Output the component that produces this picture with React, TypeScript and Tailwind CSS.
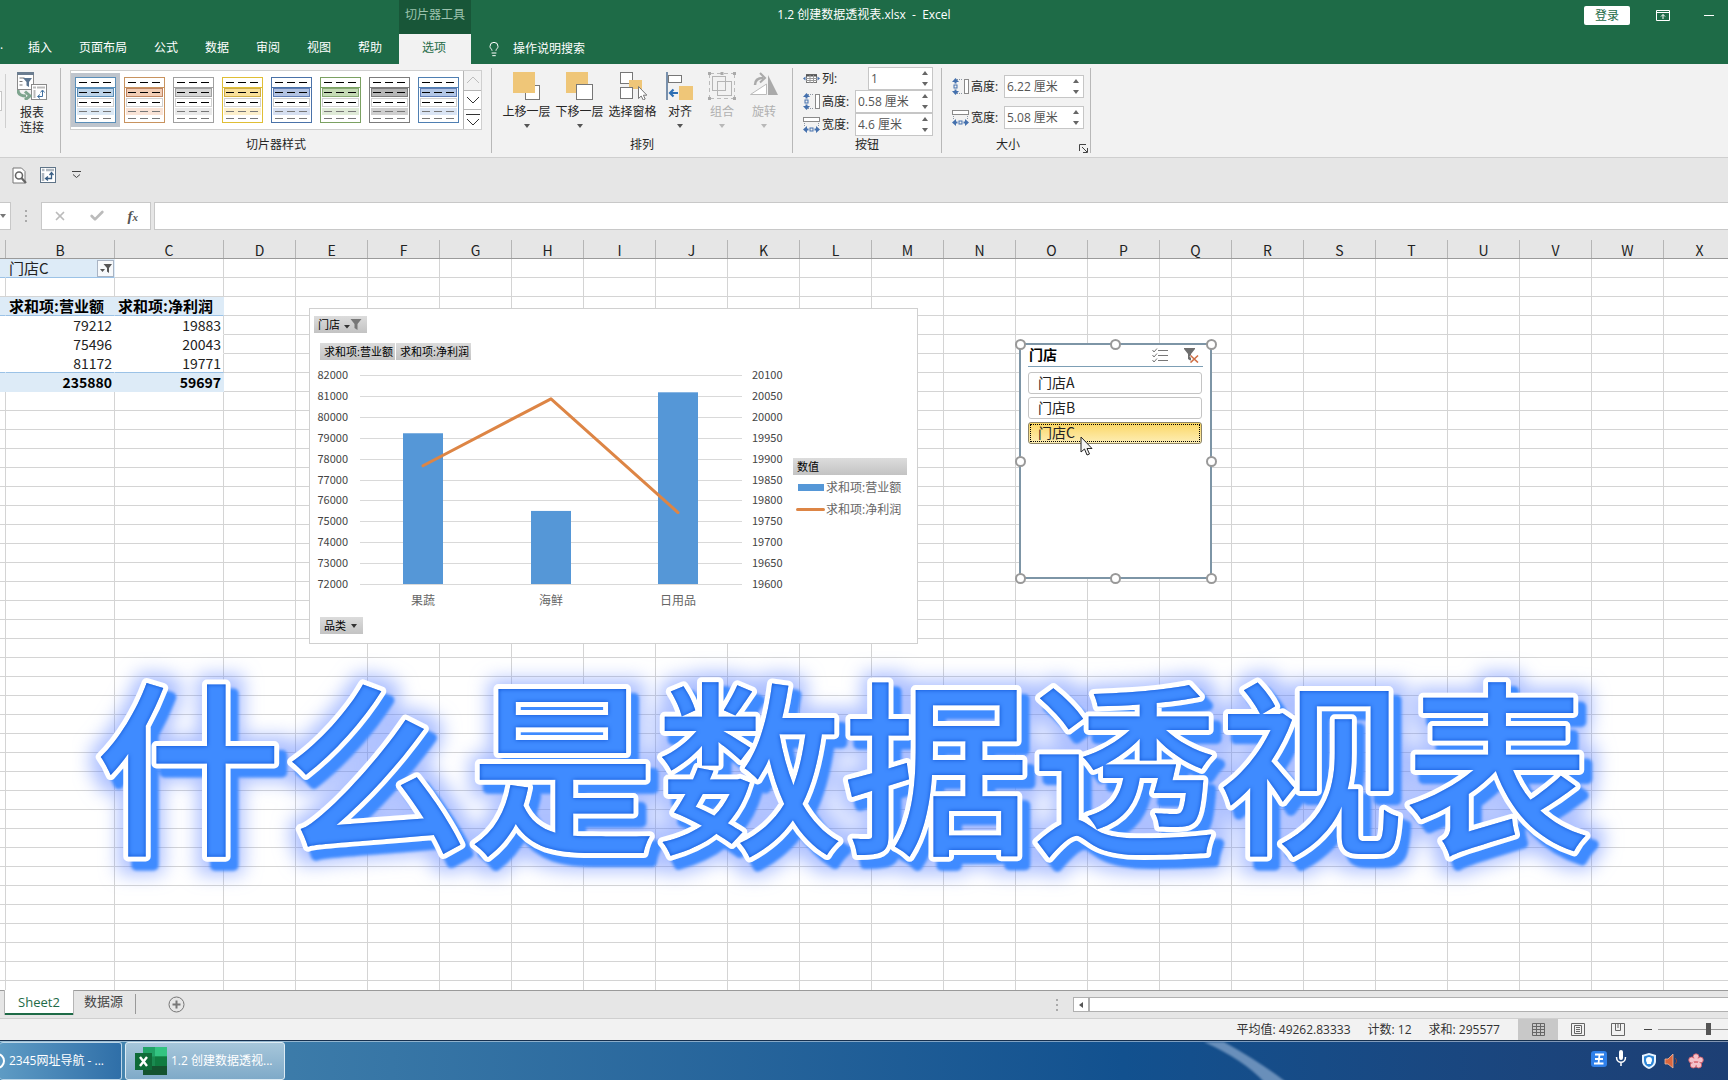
import React from 'react';
import { Check, X, Lightbulb } from 'lucide-react';

const TABS = ['插入', '页面布局', '公式', '数据', '审阅', '视图', '帮助'];

// border, header fill, soft fill for every slicer style in the gallery
const STYLES = [
  { border: 'border-[#5b8fb9]', strong: 'bg-[#bcd3e8] border-[#5b8fb9]', soft: 'bg-[#dde9f4]' },
  { border: 'border-[#c8935f]', strong: 'bg-[#f2cdb5] border-[#c08560]', soft: 'bg-[#f9e3d6]' },
  { border: 'border-[#a0a0a0]', strong: 'bg-[#d6d6d6] border-[#a0a0a0]', soft: 'bg-[#e9e9e9]' },
  { border: 'border-[#dfbe35]', strong: 'bg-[#f9e09a] border-[#cfae45]', soft: 'bg-[#fcefcb]' },
  { border: 'border-[#4a72a8]', strong: 'bg-[#b2c2e2] border-[#5f7db5]', soft: 'bg-[#d6dff0]' },
  { border: 'border-[#7ba162]', strong: 'bg-[#c4dab4] border-[#86a872]', soft: 'bg-[#dfead7]' },
  { border: 'border-[#7c7c7c]', strong: 'bg-[#b5b5b5] border-[#7c7c7c]', soft: 'bg-[#cfcfcf]' },
  { border: 'border-[#4f7fb2]', strong: 'bg-[#b2c6e6] border-[#5f7db5]', soft: 'bg-[#dbe5f4]' },
];

const COLUMNS = 'ABCDEFGHIJKLMNOPQRSTUVWX'.split('');
const ROW_COUNT = 39;

const PIVOT: Record<number, [string, string]> = {
  3: ['求和项:营业额', '求和项:净利润'],
  4: ['79212', '19883'],
  5: ['75496', '20043'],
  6: ['81172', '19771'],
  7: ['235880', '59697'],
};

const CHART = [
  { name: '果蔬', revenue: 79212, profit: 19883 },
  { name: '海鲜', revenue: 75496, profit: 20043 },
  { name: '日用品', revenue: 81172, profit: 19771 },
];

function Caret({ className = 'fill-[#555]' }: { className?: string }) {
  return (
    <svg viewBox="0 0 6 4" className={`w-1.5 h-1 ${className}`}>
      <path d="M0 0h6L3 4z" />
    </svg>
  );
}

/* ---------- title bar + tabs ---------- */

function TitleBar() {
  return (
    <header className="relative shrink-0 bg-[#1e6b47] text-white text-xs">
      <div className="h-[34px] flex items-center">
        <div className="w-[399px]" />
        <div className="w-[72px] h-full bg-[#185638] text-[#9cc3ae] flex items-center justify-center pb-1 whitespace-nowrap">
          切片器工具
        </div>
        <div className="ml-auto flex items-center pb-[3px] pr-3.5">
          <button className="w-[46px] h-[19px] rounded-[2px] bg-white text-[#1e6b47] leading-[19px]">登录</button>
          <button aria-label="功能区显示选项" className="ml-[26px]">
            <svg viewBox="0 0 14 11" className="w-3.5 h-[11px]" fill="none" stroke="white">
              <path d="M.5.5h13v10H.5zM.5 2.500h13M7 9V4.500M5 6.500l2-2 2 2" />
            </svg>
          </button>
          <button aria-label="最小化" className="ml-[34px] w-2.5 h-px bg-white" />
        </div>
      </div>
      <h1 className="absolute inset-x-0 top-[5px] text-center leading-5 whitespace-pre pointer-events-none">
        {'1.2 创建数据透视表.xlsx  -  Excel'}
      </h1>
      <nav className="h-[30px] flex items-center">
        <span className="w-3.5 leading-4">·</span>
        {TABS.map((t) => (
          <button key={t} className="px-3.5 -mr-px pb-0.5 h-full whitespace-nowrap">
            {t}
          </button>
        ))}
        <button className="ml-1 w-[72px] h-full bg-[#f2f2f2] text-[#1e6b47] pb-0.5 pr-0.5">选项</button>
        <Lightbulb className="ml-[15px] w-4 h-[18px]" strokeWidth={1.5} />
        <input
          aria-label="操作说明搜索"
          placeholder="操作说明搜索"
          className="ml-[11px] w-40 bg-transparent outline-none placeholder:text-white"
        />
      </nav>
    </header>
  );
}

/* ---------- ribbon ---------- */

function Group({
  label,
  className = '',
  labelClass = '',
  children,
}: {
  label: string;
  className?: string;
  labelClass?: string;
  children: React.ReactNode;
}) {
  return (
    <section className={`relative my-1 shrink-0 flex flex-col border-r border-[#b8b8b8] ${className}`}>
      <div className="h-[73px]">{children}</div>
      <div className={`text-center leading-4 whitespace-nowrap ${labelClass}`}>{label}</div>
    </section>
  );
}

function Dashes({ className }: { className: string }) {
  return (
    <svg viewBox="0 0 33 1" className="w-[33px] h-px" strokeDasharray="8 4">
      <path d="M0 .5h33" className={className} />
    </svg>
  );
}

function StyleSwatch({ style, selected }: { style: (typeof STYLES)[number]; selected: boolean }) {
  return (
    <button
      aria-label="切片器样式"
      className={`w-[49px] h-[54px] flex items-center justify-center ${selected ? 'bg-[#bfc5cd]' : ''}`}
    >
      <span className={`w-[41px] h-[46px] bg-white border flex flex-col items-center ${style.border}`}>
        <span className={`h-[10px] w-full border-b flex items-center justify-center ${style.border}`}>
          <Dashes className="stroke-black" />
        </span>
        <span className={`h-[9px] w-[37px] border flex items-center justify-center ${style.strong}`}>
          <Dashes className="stroke-black" />
        </span>
        <span className="mt-px h-[9px] w-[37px] border border-[#d0d0d0] flex items-center justify-center">
          <Dashes className="stroke-black" />
        </span>
        <span className={`mt-px h-[7px] w-[37px] flex items-center justify-center ${style.soft}`}>
          <Dashes className="stroke-[#777]" />
        </span>
        <span className="h-[7px] w-[37px] flex items-center justify-center">
          <Dashes className="stroke-[#777]" />
        </span>
      </span>
    </button>
  );
}

function GalleryScroll() {
  return (
    <div className="w-[18px] flex flex-col border-l border-[#b5b5b5] divide-y divide-[#b5b5b5]">
      <button aria-label="上一行" className="flex-1 flex items-center justify-center bg-[#f2f2f2]">
        <svg viewBox="0 0 14 8" className="w-3.5 h-2" fill="none" stroke="#bdbdbd">
          <path d="M1 7l6-6 6 6" />
        </svg>
      </button>
      <button aria-label="下一行" className="flex-1 flex items-center justify-center">
        <svg viewBox="0 0 14 8" className="w-3.5 h-2" fill="none" stroke="#333">
          <path d="M1 1l6 6 6-6" />
        </svg>
      </button>
      <button aria-label="其他" className="flex-1 flex items-center justify-center">
        <svg viewBox="0 0 14 14" className="w-3.5 h-3.5" fill="none" stroke="#333">
          <path d="M0 1.500h14M1 6l6 6 6-6" />
        </svg>
      </button>
    </div>
  );
}

const ARRANGE = [
  {
    label: '上移一层',
    caret: true,
    icon: (
      <>
        <rect x="12.500" y="13.500" width="14" height="14" fill="#fff" stroke="#777" />
        <rect x="0" y="0" width="22" height="21" fill="#efc678" />
      </>
    ),
  },
  {
    label: '下移一层',
    caret: true,
    icon: (
      <>
        <rect x="0" y="0" width="22" height="21" fill="#efc678" />
        <rect x="10.500" y="12.500" width="16" height="15" fill="#fff" stroke="#777" />
      </>
    ),
  },
  {
    label: '选择窗格',
    caret: false,
    icon: (
      <>
        <rect x="1.500" y=".5" width="12" height="11" fill="#fff" stroke="#777" />
        <rect x="10" y="8" width="13" height="9" fill="#efc678" />
        <rect x="1.500" y="15.500" width="12" height="11" fill="#fff" stroke="#777" />
        <path d="M19.500 14.500v12l2.700-2.500 2 4 2-1-1.800-3.800h3.500z" fill="#fff" stroke="#777" />
      </>
    ),
  },
  {
    label: '对齐',
    caret: true,
    icon: (
      <>
        <path d="M1 0v28" stroke="#4f6f95" strokeWidth="1.500" />
        <rect x="2.500" y="3.500" width="13" height="7" fill="#fff" stroke="#777" />
        <rect x="13" y="14" width="14" height="14" fill="#efc678" />
        <path d="M4 21h8M7.500 17.500L4 21l3.500 3.500" fill="none" stroke="#2f6fb4" strokeWidth="2.200" />
      </>
    ),
  },
  {
    label: '组合',
    caret: true,
    disabled: true,
    icon: (
      <>
        <path d="M2 1.500h24M2 26.500h24M1.500 2v24M26.500 2v24" stroke="#bbb" strokeDasharray="4 3" />
        <rect x="4.500" y="4.500" width="13" height="14" fill="none" stroke="#b5b5b5" />
        <rect x="9.500" y="9.500" width="14" height="14" fill="none" stroke="#b5b5b5" />
        <path d="M0 0h3v3H0zM25 0h3v3h-3zM0 25h3v3H0zM25 25h3v3h-3zM12.500 0h3v3h-3z" fill="#aaa" />
      </>
    ),
  },
  {
    label: '旋转',
    caret: true,
    disabled: true,
    icon: (
      <>
        <path d="M18 3v20h10z" fill="#aaa" />
        <path d="M16.500 12v10.500H.5z" fill="#fff" stroke="#bbb" />
        <path d="M5 13c0-5 3-7 8-7" fill="none" stroke="#aaa" strokeWidth="2.500" />
        <path d="M10 1l5 5-5 4.500" fill="none" stroke="#aaa" strokeWidth="2" />
      </>
    ),
  },
];

function HeightIcon() {
  return (
    <svg viewBox="0 0 17 17" className="w-[17px] h-[17px]" fill="none">
      <path d="M5 1.500h6M5 15.500h6" stroke="#8d96a3" strokeDasharray="1 1" />
      <rect x="12.500" y="1.500" width="4" height="14" fill="#fff" stroke="#8a8a8a" />
      <path d="M3.500 0L0 4h2.500v1.500h2V4H7zM3.500 17L0 13h2.500v-1.500h2V13H7z" fill="#4470ad" />
      <rect x="2" y="7" width="3" height="3" stroke="#4470ad" />
    </svg>
  );
}

function WidthIcon() {
  return (
    <svg viewBox="0 0 17 17" className="w-[17px] h-[17px]" fill="none">
      <rect x=".5" y="1.500" width="16" height="4" fill="#fff" stroke="#8a8a8a" />
      <path d="M1.500 7v4M15.500 7v4" stroke="#8d96a3" strokeDasharray="1 1" />
      <path d="M0 13.500L4 10v2.500h1.500v2H4V17zM17 13.500L13 10v2.500h-1.500v2H13V17z" fill="#4470ad" />
      <rect x="7" y="12" width="3" height="3" stroke="#4470ad" />
    </svg>
  );
}

function ColumnsIcon() {
  return (
    <svg viewBox="0 0 17 17" className="w-[17px] h-[17px]" fill="none">
      <rect x="3.500" y="4.500" width="10" height="8" fill="#fff" stroke="#777" />
      <path d="M3 5.500h11" stroke="#555" strokeWidth="2" />
      <path d="M3 8.500h11M3 10.500h11M7 5v8M10.500 5v8" stroke="#999" />
      <path d="M0 8.500l2.500-2v4zM17 8.500l-2.500-2v4z" fill="#4470ad" />
    </svg>
  );
}

function SpinField({ id, icon, label, value, width }: { id: string; icon: React.ReactNode; label: string; value: string; width: string }) {
  const [text, setText] = React.useState(value);
  return (
    <div className="flex items-center h-[23px]">
      {icon}
      <label htmlFor={id} className="ml-0.5 whitespace-nowrap">
        {label}
      </label>
      <div className={`ml-auto h-[23px] bg-white border border-[#c6c6c6] flex ${width}`}>
        <input
          id={id}
          value={text}
          onChange={(e) => setText(e.target.value)}
          className="min-w-0 flex-1 pl-0.5 text-[#555] bg-transparent outline-none"
        />
        <div className="w-3.5 flex flex-col items-center justify-around">
          <button aria-label="增大">
            <Caret className="rotate-180 fill-[#666]" />
          </button>
          <button aria-label="减小">
            <Caret className="fill-[#666]" />
          </button>
        </div>
      </div>
    </div>
  );
}

function Ribbon() {
  return (
    <div className="h-[94px] shrink-0 bg-[#f2f2f2] border-b border-[#cfcfcf] flex text-xs text-[#262626]">
      <Group label="" className="w-[61px]">
        <div className="flex">
          <div className="w-1.5 h-[54px] mt-1.5 border-r border-[#cfcfcf] flex items-center">
            <span className="w-0.5 h-5 border-y border-r border-[#c6c6c6] bg-white" />
          </div>
          <button className="w-[52px] flex flex-col items-center pt-1 leading-[15px]">
            <svg viewBox="0 0 30 28" className="w-[30px] h-7 mb-[5px]" fill="none">
              <rect x=".5" y=".5" width="16" height="17" fill="#fff" stroke="#8a8a8a" />
              <path d="M0 1.500h17" stroke="#6b7d90" strokeWidth="3" />
              <path d="M2.500 6h5M2.500 9.500h3M2.500 13h3" stroke="#777" />
              <path d="M6 6h9l-3 4v5l-2.500-1.500V10z" fill="#5b7590" />
              <rect x="14.500" y="12.500" width="15" height="15" fill="#fff" stroke="#8a8a8a" />
              <path d="M16 15.500h3M20 15.500h8M17.500 18v8" stroke="#bbb" strokeWidth="2" />
              <path d="M21 24.500h4.500v-6M23.500 20.500l2-2.500 2 2.500M23 22.500l-2.500 2 2.500 2" stroke="#3f6f9f" />
              <path d="M1 18c0 5 4 6 8 6M8 19.500l5 4.500-5 4" stroke="#7fa58f" strokeWidth="3" />
            </svg>
            <span>报表</span>
            <span>连接</span>
          </button>
        </div>
      </Group>

      <Group label="切片器样式" className="w-[431px]">
        <div className="ml-[9px] mt-0.5 w-[412px] h-[60px] flex border border-[#cfcfcf] bg-white">
          <div className="flex items-center">
            {STYLES.map((s, i) => (
              <StyleSwatch key={i} style={s} selected={i === 0} />
            ))}
          </div>
          <GalleryScroll />
        </div>
      </Group>

      <Group label="排列" className="w-[301px]">
        <div className="pl-2 flex">
          {ARRANGE.map((a) => (
            <button
              key={a.label}
              disabled={a.disabled}
              className={`flex flex-col items-center pt-1 whitespace-nowrap disabled:text-[#b0b0b0] ${
                a.label.length > 2 ? 'w-[53px]' : 'w-[42px]'
              }`}
            >
              <svg viewBox="0 0 28 28" className="w-7 h-7">
                {a.icon}
              </svg>
              <span className="mt-1 mb-1 leading-4">{a.label}</span>
              {a.caret && <Caret className={a.disabled ? 'fill-[#b8b8b8]' : 'fill-[#555]'} />}
            </button>
          ))}
        </div>
      </Group>

      <Group label="按钮" className="w-[149px]">
        <div className="-mt-px pl-2.5 pr-2">
          <SpinField id="cols" icon={<ColumnsIcon />} label="列:" value="1" width="w-[65px]" />
          <SpinField id="btn-h" icon={<HeightIcon />} label="高度:" value="0.58 厘米" width="w-[78px]" />
          <SpinField id="btn-w" icon={<WidthIcon />} label="宽度:" value="4.6 厘米" width="w-[78px]" />
        </div>
      </Group>

      <Group label="大小" labelClass="pr-4" className="w-[149px]">
        <div className="pl-2.5 pr-1.5 pt-[7px] flex flex-col gap-2">
          <SpinField id="size-h" icon={<HeightIcon />} label="高度:" value="6.22 厘米" width="w-[80px]" />
          <SpinField id="size-w" icon={<WidthIcon />} label="宽度:" value="5.08 厘米" width="w-[80px]" />
        </div>
        <button aria-label="大小和属性" className="absolute right-0.5 bottom-0">
          <svg viewBox="0 0 9 9" className="w-[9px] h-[9px]" fill="none" stroke="#444">
            <path d="M.5 7V.5H7M3 3l5 5M8.500 4v4.500H4" />
          </svg>
        </button>
      </Group>
    </div>
  );
}

/* ---------- quick access + formula bar ---------- */

function QuickAccess() {
  return (
    <div className="h-[34px] shrink-0 flex items-center pl-3">
      <button aria-label="打印预览">
        <svg viewBox="0 0 15 17" className="w-[15px] h-[17px]" fill="none">
          <path d="M1 1h8.500L13 4.500V16H1z" fill="#fff" stroke="#777" />
          <circle cx="7" cy="8.500" r="3.500" stroke="#666" strokeWidth="1.600" />
          <path d="M9.500 11l4.500 5" stroke="#666" strokeWidth="2.200" />
        </svg>
      </button>
      <button aria-label="数据透视表" className="ml-[13px]">
        <svg viewBox="0 0 16 16" className="w-4 h-4" fill="none">
          <rect x=".5" y=".5" width="15" height="15" fill="#fff" stroke="#5f7488" />
          <path d="M2 3h2.500M6 3h8M3 6v8" stroke="#b0b8c0" strokeWidth="2.500" />
          <path d="M6 11.500h5.500v-5M9.500 8l2-2.500 2 2.500M8 9.500l-2.500 2 2.500 2" stroke="#3a5f85" strokeWidth="1.300" />
        </svg>
      </button>
      <button aria-label="自定义快速访问工具栏" className="ml-4">
        <svg viewBox="0 0 9 8" className="w-[9px] h-2" fill="none" stroke="#444">
          <path d="M0 .5h9M1 3.500l3.500 3L8 3.500" />
        </svg>
      </button>
    </div>
  );
}

function FormulaBar() {
  return (
    <div className="shrink-0 pt-[10px] pb-px flex h-[39px]">
      <button aria-label="名称框" className="w-[11px] bg-white border border-l-0 border-[#c8c8c8] flex items-center">
        <Caret className="fill-[#777]" />
      </button>
      <svg viewBox="0 0 2 12" className="w-0.5 h-3 ml-3.5 self-center fill-[#aaa]">
        <path d="M0 0h2v2H0zM0 5h2v2H0zM0 10h2v2H0z" />
      </svg>
      <div className="ml-3.5 w-[110px] bg-white border border-[#c8c8c8] flex items-center justify-between pl-[11px] pr-3">
        <button aria-label="取消">
          <X className="w-3.5 h-3.5 text-[#bbb]" strokeWidth={3} />
        </button>
        <button aria-label="输入">
          <Check className="w-4 h-4 text-[#bbb]" strokeWidth={4} />
        </button>
        <button aria-label="插入函数" className="font-['Liberation_Serif',serif] italic font-bold text-[15px] leading-none text-[#555]">
          f<span className="text-[11px]">x</span>
        </button>
      </div>
      <input aria-label="编辑栏" className="ml-[3px] flex-1 min-w-0 bg-white border border-r-0 border-[#c8c8c8] outline-none" />
    </div>
  );
}

/* ---------- worksheet ---------- */

const LINE = 'border-[#d4d4d4]';

function Cell({ row, col }: { row: number; col: string }) {
  const inPivot = (col === 'A' || col === 'B' || col === 'C') && PIVOT[row];
  const text = inPivot && col !== 'A' ? PIVOT[row][col === 'B' ? 0 : 1] : '';
  const base = 'h-[19px] p-0 leading-[18px] whitespace-nowrap border-r border-b';

  if (row === 1 && col === 'B') {
    return (
      <td className={`${base} bg-[#ddebf7] border-r-[#ddebf7] border-b-[#9bc2e6] text-[15px]`}>
        <div className="flex items-center pl-[3px]">
          <span>门店C</span>
          <button aria-label="筛选" className="ml-auto w-[17px] h-[17px] bg-[#f7f9fb] border border-[#a9b4c4] flex items-center justify-center">
            <svg viewBox="0 0 12 11" className="w-3 h-[11px]" fill="#555">
              <path d="M3.500 1H12L9 5v5L7 8.500V5zM0 6h5L2.500 9z" />
            </svg>
          </button>
        </div>
      </td>
    );
  }
  if (row === 1 && col === 'A') return <td className={`${base} bg-[#ddebf7] border-r-[#ddebf7] border-b-[#9bc2e6]`} />;
  if (inPivot) {
    const banded = row === 3 || row === 7;
    const edge = col === 'C' && !banded ? 'border-r-[#d4d4d4]' : banded ? 'border-r-[#ddebf7]' : 'border-r-white';
    const bottom = row === 3 || row === 6 ? 'border-b-[#9bc2e6]' : row === 7 ? 'border-b-[#ddebf7]' : 'border-b-white';
    return (
      <td
        className={`${base} ${edge} ${bottom} ${banded ? 'bg-[#ddebf7] font-bold text-black' : 'bg-white'} ${
          row === 3 ? 'text-left pl-[3px] text-[15px]' : 'text-right pr-0.5 text-[14px]'
        }`}
      >
        {text}
      </td>
    );
  }
  return <td className={`${base} ${LINE}`} />;
}

function Grid() {
  return (
    <table className="table-fixed w-px border-separate border-spacing-0 bg-white text-[#222] font-['Noto_Sans_CJK_SC',sans-serif]">
      <colgroup>
        {COLUMNS.map((c) => (
          <col key={c} className={c === 'A' ? 'w-[6px]' : c === 'B' || c === 'C' ? 'w-[109px]' : 'w-[72px]'} />
        ))}
      </colgroup>
      <thead>
        <tr>
          {COLUMNS.map((c) => (
            <th key={c} scope="col" className="p-0 h-7 bg-[#e6e6e6] border-b border-[#9a9a9a] font-normal text-[14px] align-bottom">
              <div className="h-[18px] leading-5 border-r border-[#b5b5b5]">{c === 'A' ? '' : c}</div>
            </th>
          ))}
        </tr>
      </thead>
      <tbody>
        {Array.from({ length: ROW_COUNT }, (_, i) => i + 1).map((r) => (
          <tr key={r}>
            {COLUMNS.map((c) => (
              <Cell key={c} row={r} col={c} />
            ))}
          </tr>
        ))}
      </tbody>
    </table>
  );
}

const PLOT = { left: 50, right: 432, top: 15, bottom: 224 };

function PlotArea() {
  const steps = Array.from({ length: 11 }, (_, i) => i);
  const height = PLOT.bottom - PLOT.top;
  const slot = (PLOT.right - PLOT.left) / CHART.length;
  const x = (i: number) => Math.floor(PLOT.left + slot * (i + 0.5));
  const yRevenue = (v: number) => PLOT.bottom - ((v - 72000) / 10000) * height;
  const yProfit = (v: number) => PLOT.bottom - ((v - 19600) / 500) * height;
  return (
    <svg viewBox="0 0 480 256" className="w-[480px] h-64 shrink-0 font-['Noto_Sans_CJK_SC',sans-serif]">
      {steps.map((s) => {
        const y = Math.round(PLOT.bottom - (s / 10) * height);
        return (
          <g key={s} fontSize="11" fill="#444">
            <path d={`M${PLOT.left} ${y + 0.5}H${PLOT.right}`} stroke="#d9d9d9" />
            <text x="38" y={y + 4} textAnchor="end">
              {72000 + s * 1000}
            </text>
            <text x="442" y={y + 4}>
              {19600 + s * 50}
            </text>
          </g>
        );
      })}
      {CHART.map((d, i) => (
        <g key={d.name}>
          <rect x={x(i) - 20} y={yRevenue(d.revenue)} width="40" height={PLOT.bottom - yRevenue(d.revenue)} fill="#5597d7" />
          <text x={x(i)} y="245" textAnchor="middle" fontSize="12" fill="#666">
            {d.name}
          </text>
        </g>
      ))}
      <polyline
        points={CHART.map((d, i) => `${x(i)},${yProfit(d.profit)}`).join(' ')}
        fill="none"
        stroke="#dd8545"
        strokeWidth="3"
        strokeLinecap="round"
        strokeLinejoin="round"
      />
    </svg>
  );
}

const FIELD_BUTTON = 'h-[17px] bg-linear-to-b from-[#dcdcdc] to-[#c3c3c3] leading-[17px] text-black whitespace-nowrap';

function PivotChart() {
  return (
    <div className="absolute left-[309px] top-[77px] w-[609px] h-[336px] bg-white border border-[#d0d0d0] text-[11px]">
      <button className={`${FIELD_BUTTON} ml-1 mt-[7px] w-[53px] flex items-center pl-1`}>
        门店
        <svg viewBox="0 0 18 11" className="ml-1 w-[18px] h-[11px]" fill="#555">
          <path d="M0 6h6L3 9.500z" fill="#333" />
          <path d="M6.500 0h11l-4 5v6l-3-2V5z" fill="#777" />
        </svg>
      </button>
      <div className="ml-2.5 mt-2.5 flex gap-px">
        <button className={`${FIELD_BUTTON} w-[75px] text-left pl-1`}>求和项:营业额</button>
        <button className={`${FIELD_BUTTON} w-[75px] text-left pl-1`}>求和项:净利润</button>
      </div>
      <div className="flex">
        <PlotArea />
        <div className="mt-[98px] ml-[3px] w-[114px]">
          <button className={`${FIELD_BUTTON} w-full text-left pl-1`}>数值</button>
          <ul className="mt-1 text-xs text-[#666] leading-4 flex flex-col gap-1.5 whitespace-nowrap">
            <li className="flex items-center">
              <span className="ml-[5px] mr-0.5 w-[26px] h-[7px] bg-[#5597d7]" />
              求和项:营业额
            </li>
            <li className="flex items-center">
              <span className="ml-[3px] mr-px w-[29px] h-[3px] rounded-full bg-[#dd8545]" />
              求和项:净利润
            </li>
          </ul>
        </div>
      </div>
      <button className={`${FIELD_BUTTON} ml-2.5 mt-px w-[43px] flex items-center pl-1`}>
        品类
        <Caret className="ml-[5px] fill-[#333]" />
      </button>
    </div>
  );
}

const HANDLES = [
  '-left-[6px] -top-[6px]',
  'left-1/2 -ml-[6px] -top-[6px]',
  '-right-[7px] -top-[6px]',
  '-left-[6px] top-1/2 -mt-[5px]',
  '-right-[7px] top-1/2 -mt-[5px]',
  '-left-[6px] -bottom-[7px]',
  'left-1/2 -ml-[6px] -bottom-[7px]',
  '-right-[7px] -bottom-[7px]',
];

function Slicer() {
  const [store, setStore] = React.useState('门店C');
  return (
    <div className="absolute left-[1019px] top-[112px] w-[193px] h-[236px] bg-white border-2 border-[#7d95a6] px-[7px] font-['Noto_Sans_CJK_SC',sans-serif] text-[14px] text-[#222]">
      <div className="h-[22px] flex items-center border-b border-[#7d9fb5]">
        <span className="pl-px pb-1 font-bold text-black leading-4">门店</span>
        <button aria-label="多选" className="ml-auto">
          <svg viewBox="0 0 16 15" className="w-4 h-[15px]" fill="none" stroke="#777">
            <path d="M6 2.500h10M6 7.500h10M6 12.500h10M.5 2l1.500 2L5 .5M.5 7L2 9l3-3.500M.5 12L2 14l3-3.500" />
          </svg>
        </button>
        <button aria-label="清除筛选器" className="ml-4 mr-1">
          <svg viewBox="0 0 15 15" className="w-[15px] h-[15px]">
            <path d="M0 0h11v1L7 6v7l-3-2V6L0 1z" fill="#6e6e6e" />
            <path d="M6.500 7.500l7.500 7M14 7.500l-7.500 7" stroke="#fff" strokeWidth="3" />
            <path d="M6.500 7.500l7.500 7M14 7.500l-7.500 7" stroke="#cf6f45" strokeWidth="1.600" />
          </svg>
        </button>
      </div>
      <div className="mt-[5px] mr-px flex flex-col gap-[3px]">
        {['门店A', '门店B', '门店C'].map((s) => (
          <button
            key={s}
            onClick={() => setStore(s)}
            className={`h-[22px] rounded-[3px] border p-px text-left ${
              s === store ? 'border-[#8c8468] bg-linear-to-b from-[#fbd660] to-[#fdeeb4]' : 'border-[#c4c4c4] bg-white'
            }`}
          >
            <span className={`block h-[18px] pl-[7px] leading-[14px] border border-dotted ${s === store ? 'border-black' : 'border-transparent'}`}>
              {s}
            </span>
          </button>
        ))}
      </div>
      {HANDLES.map((h) => (
        <span key={h} className={`absolute w-[11px] h-[11px] rounded-full bg-white border-2 border-[#999] ${h}`} />
      ))}
      <svg viewBox="0 0 13 20" className="absolute left-[59px] top-[91px] w-[13px] h-5">
        <path d="M1 1v15l3.500-3 2.500 6 2.500-1L7 12.500h5z" fill="#f4f4f4" stroke="#222" />
      </svg>
    </div>
  );
}

function Caption() {
  return (
    <svg
      viewBox="0 0 1560 260"
      className="absolute left-[72px] top-[409px] w-[1560px] h-[260px] pointer-events-none font-['Noto_Sans_CJK_SC',sans-serif] font-medium"
      fontSize="187"
    >
      <defs>
        <filter id="caption" x="-5%" y="-20%" width="110%" height="140%" colorInterpolationFilters="sRGB">
          {/* glow */}
          <feOffset in="SourceAlpha" dx="4" dy="4" result="moved" />
          <feMorphology in="moved" operator="dilate" radius="9" />
          <feGaussianBlur stdDeviation="9" result="halo" />
          <feFlood floodColor="#5b82ff" floodOpacity="0.5" />
          <feComposite in2="halo" operator="in" result="glow" />
          {/* drop shadow */}
          <feOffset in="SourceAlpha" dx="8" dy="9" />
          <feGaussianBlur stdDeviation="1.500" result="drop" />
          <feFlood floodColor="#3f8bff" />
          <feComposite in2="drop" operator="in" result="shadow" />
          {/* darker rim just inside the white outline: alpha - red leaves only the blue fill */}
          <feColorMatrix in="SourceGraphic" type="matrix" values="0 0 0 0 0  0 0 0 0 0  0 0 0 0 0  -1.330 0 0 1.330 0" result="fillMask" />
          <feComponentTransfer in="fillMask">
            <feFuncA type="table" tableValues="1 0" />
          </feComponentTransfer>
          <feGaussianBlur stdDeviation="2" result="inverse" />
          <feFlood floodColor="#0b50d0" />
          <feComposite in2="inverse" operator="in" />
          <feComposite in2="fillMask" operator="in" result="rim" />
          <feMerge>
            <feMergeNode in="glow" />
            <feMergeNode in="shadow" />
            <feMergeNode in="SourceGraphic" />
            <feMergeNode in="rim" />
          </feMerge>
        </filter>
      </defs>
      <text
        x="23"
        y="201"
        fill="#3f8bff"
        stroke="#fff"
        strokeWidth="10"
        strokeLinejoin="round"
        paintOrder="stroke"
        filter="url(#caption)"
      >
        什么是数据透视表
      </text>
    </svg>
  );
}

/* ---------- bottom bars ---------- */

function SheetTabs() {
  return (
    <div className="h-[29px] shrink-0 bg-[#e6e6e6] border-t border-t-[#9a9a9a] border-b border-b-[#cfcfcf] flex text-[13px] text-[#444]">
      <button className="-mt-px ml-1 w-[70px] h-[25px] bg-white border-x border-[#b5b5b5] shadow-[inset_0_-2px_0_#1e6b47] text-[#1e6b47] pb-0.5 leading-5">
        Sheet2
      </button>
      <button className="pl-2.5 pr-3 h-6 pb-1 leading-5">数据源</button>
      <span className="w-px h-5 mt-[3px] bg-[#999]" />
      <button aria-label="新工作表" className="ml-8">
        <svg viewBox="0 0 17 17" className="w-[17px] h-[17px]" fill="none" stroke="#777">
          <circle cx="8.500" cy="8.500" r="7.500" />
          <path d="M4.500 8.500h8M8.500 4.500v8" strokeWidth="2" />
        </svg>
      </button>
      <div className="ml-auto w-[673px] flex items-center">
        <svg viewBox="0 0 2 12" className="w-0.5 h-3 mx-px fill-[#aaa]">
          <path d="M0 0h2v2H0zM0 5h2v2H0zM0 10h2v2H0z" />
        </svg>
        <button aria-label="向左滚动" className="ml-3.5 w-4 h-[15px] bg-white border border-[#b0b0b0] flex items-center justify-center">
          <svg viewBox="0 0 4 6" className="w-1 h-1.5 fill-[#555]">
            <path d="M4 0v6L0 3z" />
          </svg>
        </button>
        <span className="flex-1 h-[15px] bg-white border-y border-l border-[#b0b0b0]" />
      </div>
    </div>
  );
}

function StatusBar() {
  return (
    <div className="h-[21px] shrink-0 bg-[#f2f2f2] flex items-center justify-end text-xs text-[#333] whitespace-nowrap">
      <span>平均值: 49262.83333</span>
      <span className="ml-[17px]">计数: 12</span>
      <span className="ml-[17px]">求和: 295577</span>
      <div className="ml-[18px] h-full flex">
        <button aria-label="普通" className="w-10 bg-[#c8c8c8] flex items-center justify-center">
          <svg viewBox="0 0 13 13" className="w-[13px] h-[13px]" fill="none" stroke="#666">
            <path d="M.5.5h12v12H.5zM4.500 0v13M8.500 0v13M0 3.500h13M0 6.500h13M0 9.500h13" />
          </svg>
        </button>
        <button aria-label="页面布局" className="w-10 flex items-center justify-center">
          <svg viewBox="0 0 14 13" className="w-3.5 h-[13px]" fill="none" stroke="#666">
            <path d="M.5.5h13v12H.5zM3.500 2.500h7v8h-7zM5 4.500h4M5 6.500h4M5 8.500h4" />
          </svg>
        </button>
        <button aria-label="分页预览" className="w-10 flex items-center justify-center">
          <svg viewBox="0 0 14 13" className="w-3.5 h-[13px]" fill="none" stroke="#666">
            <path d="M.5.5h13v12H.5zM4.500 0v7.500h5V0M7 0v5" />
          </svg>
        </button>
      </div>
      <button aria-label="缩小" className="ml-1.5 w-2 h-px bg-[#444]" />
      <div className="ml-1.5 w-[70px] h-px bg-[#999] relative">
        <span className="absolute left-12 -top-[6px] w-[5px] h-3 bg-[#555]" />
      </div>
    </div>
  );
}

function ExcelLogo() {
  return (
    <svg viewBox="0 0 32 28" className="w-8 h-7">
      <path d="M8 0h24v28H8z" fill="#1a8a50" />
      <path d="M8 0h12v9.500H8z" fill="#21a366" />
      <path d="M20 0h12v9.500H20z" fill="#33c481" />
      <path d="M8 19h24v9H8z" fill="#14532f" />
      <path d="M20 9.500h12V19H20z" fill="#107c41" />
      <path d="M0 6h17v17H0z" fill="#0f6b38" />
      <path d="M5 10l7 9M12 10l-7 9" stroke="#fff" strokeWidth="2.400" />
    </svg>
  );
}

function Taskbar() {
  return (
    <div className="relative h-10 shrink-0 border-t border-[#16304f] bg-linear-to-r from-[#4a8ab2] via-[#12518f] via-65% to-[#1d3f74] shadow-[inset_0_1px_0_rgba(255,255,255,0.45)] flex items-center text-xs text-white overflow-hidden">
      <svg viewBox="0 0 90 40" className="absolute left-[1202px] top-px w-[90px] h-10 blur-[1px]">
        <path d="M2 0h20Q58 20 84 40H62Q42 18 2 0z" fill="#86a5cb" opacity="0.75" />
      </svg>
      <button className="w-[122px] h-[38px] flex items-center rounded-[3px] border border-l-0 border-[#bcd6e8] bg-linear-to-r from-[#5e9bc4] to-[#2f6fa8] whitespace-nowrap">
        <svg viewBox="0 0 5 16" className="w-[5px] h-4" fill="none">
          <path d="M-3 1a7 7 0 0 1 0 14" stroke="#fff" strokeWidth="2" />
        </svg>
        <span className="ml-1">2345网址导航 - ...</span>
      </button>
      <button className="ml-[3px] w-40 h-[38px] pl-[9px] flex items-center rounded-[3px] border border-[#dcebf4] bg-linear-to-b from-[#a6c6da] to-[#7faac8] whitespace-nowrap">
        <ExcelLogo />
        <span className="ml-1">1.2 创建数据透视...</span>
      </button>
      <div className="ml-auto pr-6 flex items-center">
        <svg viewBox="0 0 16 16" className="w-4 h-4 mb-1">
          <rect width="16" height="16" rx="3" fill="#2f80ea" />
          <path d="M4 3.500h9M4 8h8M3 12.500h9.500M8.500 3.500l-1 9" stroke="#fff" strokeWidth="1.800" />
        </svg>
        <svg viewBox="0 0 12 17" className="w-3 h-[17px] ml-2 mb-1" fill="none">
          <rect x="4" y="0" width="4" height="10" rx="2" fill="#fff" />
          <path d="M1.500 7c0 7 9 7 9 0M6 12v4" stroke="#fff" strokeWidth="1.500" />
        </svg>
        <svg viewBox="0 0 14 16" className="w-3.5 h-4 ml-[15px]">
          <path d="M7 0l7 2v6c0 4-3 6.500-7 8-4-1.500-7-4-7-8V2z" fill="#e8f4ff" />
          <path d="M7 2l5 1.500V8c0 3-2 5-5 6-3-1-5-3-5-6V3.500z" fill="#2c86d8" />
          <path d="M7 4a3 3 0 0 1 3 3c0 2-1 2-1 4H5c0-2-1-2-1-4a3 3 0 0 1 3-3z" fill="#fff" />
        </svg>
        <svg viewBox="0 0 16 16" className="w-4 h-4 ml-2">
          <path d="M1 6h3l5-5v14L4 11H1z" fill="#d9673f" stroke="#f1b79d" strokeWidth=".8" />
          <path d="M11 5c2 2 2 4 0 6" fill="none" stroke="#a34a2c" />
        </svg>
        <svg viewBox="0 0 16 16" className="w-4 h-4 ml-2" fill="#f4c3cb" stroke="#d4545f" strokeWidth=".8">
          <circle cx="8" cy="3.800" r="3" />
          <circle cx="12.300" cy="7" r="3" />
          <circle cx="10.700" cy="12" r="3" />
          <circle cx="5.300" cy="12" r="3" />
          <circle cx="3.700" cy="7" r="3" />
          <circle cx="8" cy="8.500" r="3.600" stroke="none" />
          <path d="M6 8l1 2 1-2 1 2 1-2" fill="none" />
        </svg>
      </div>
    </div>
  );
}

export default function App() {
  return (
    <div className="h-screen flex flex-col overflow-hidden bg-[#e6e6e6] font-['Open_Sans','Noto_Sans_CJK_SC',sans-serif]">
      <TitleBar />
      <Ribbon />
      <QuickAccess />
      <FormulaBar />
      <main className="relative flex-1 min-h-0 overflow-hidden">
        <Grid />
        <PivotChart />
        <Slicer />
        <Caption />
      </main>
      <SheetTabs />
      <StatusBar />
      <Taskbar />
    </div>
  );
}
